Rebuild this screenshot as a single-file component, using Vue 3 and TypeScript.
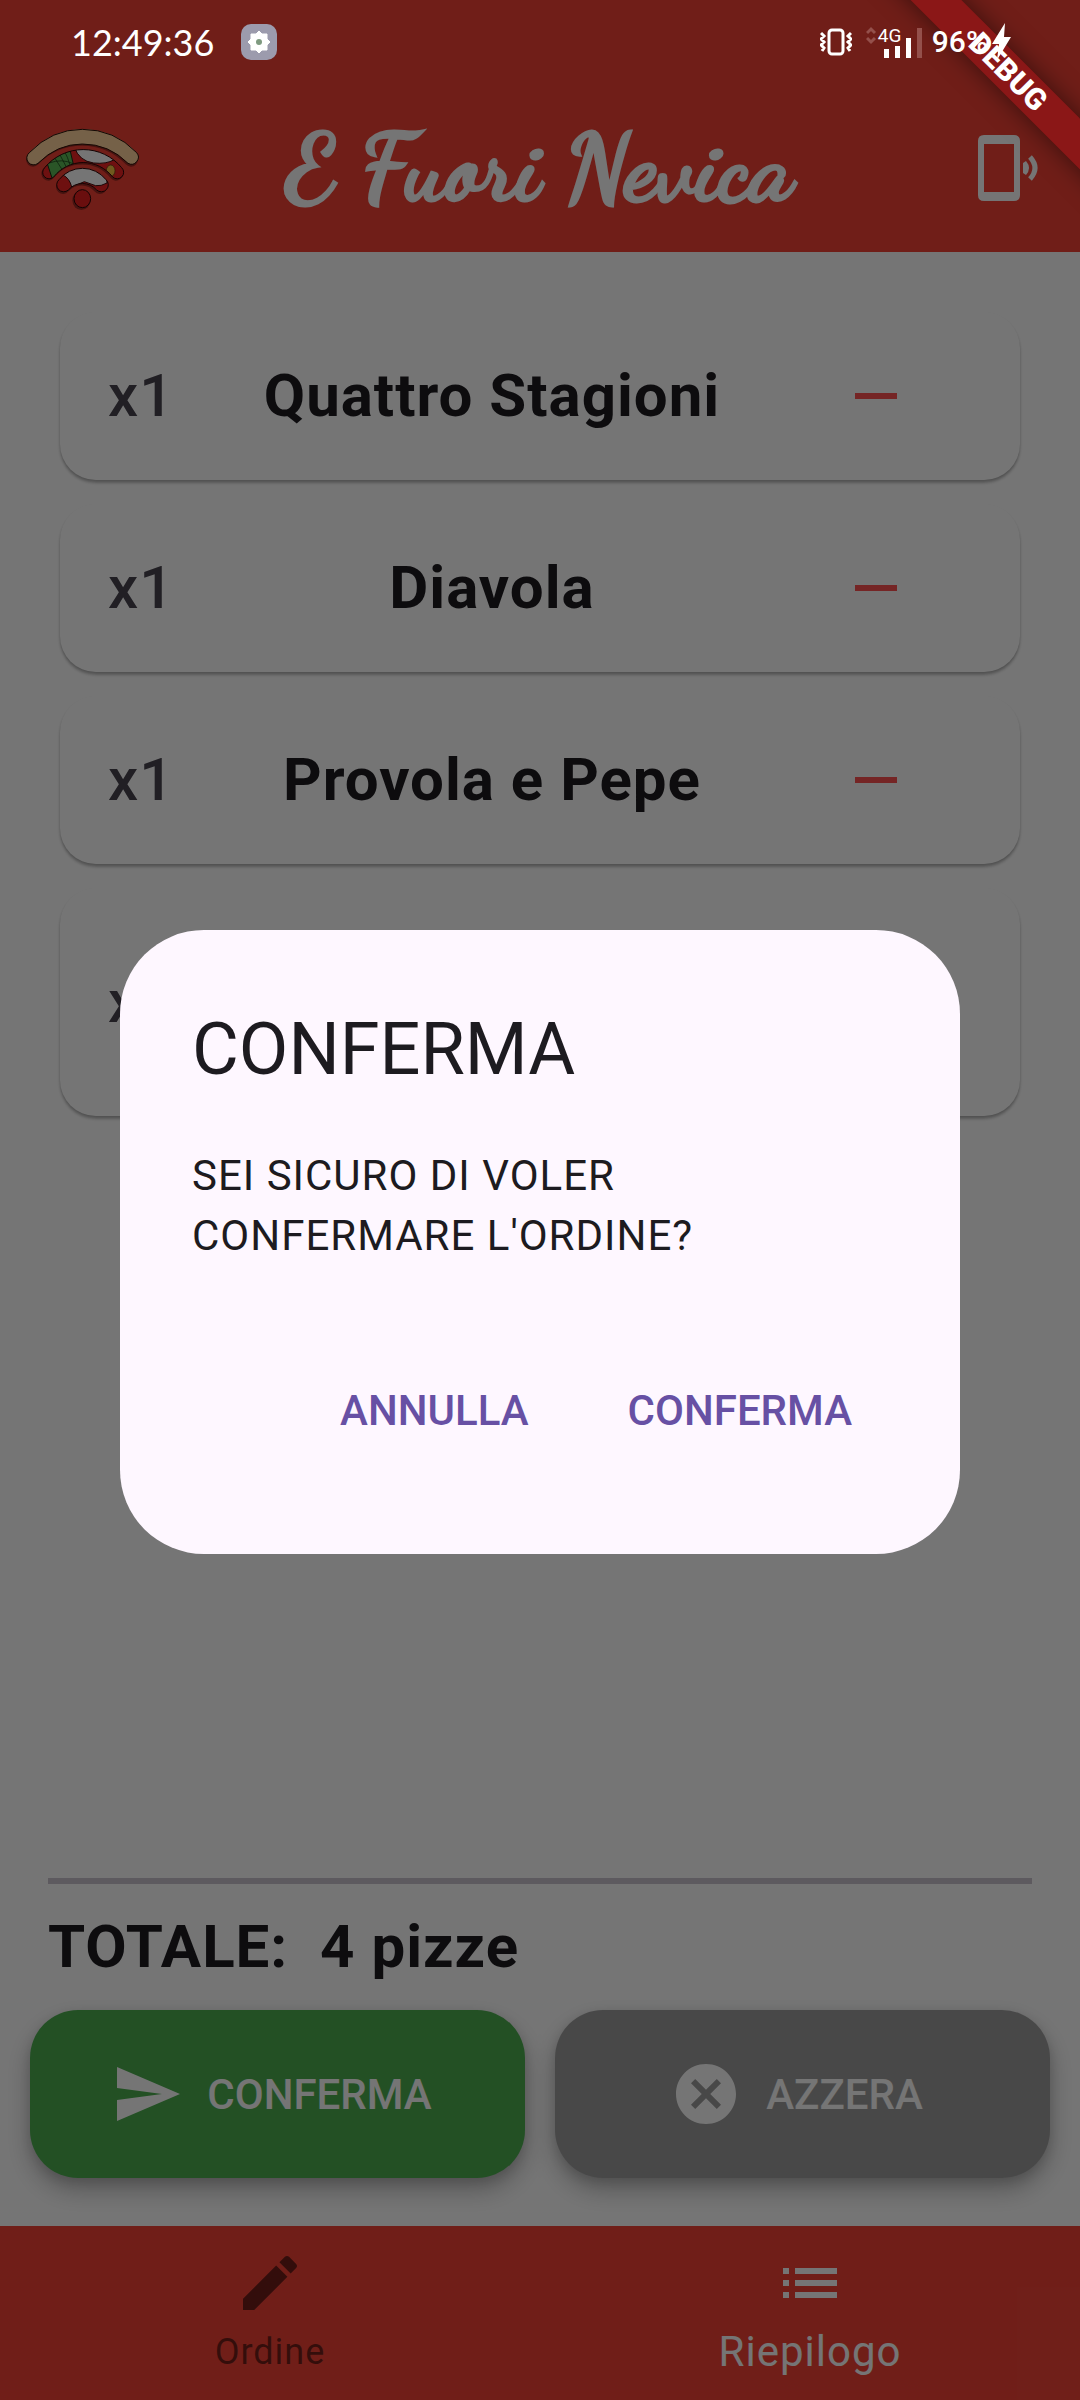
<script setup lang="ts">
import { computed, ref } from 'vue'

interface OrderLine {
  id: number
  quantity: number
  name: string
  tall?: boolean
}

const lines = ref<OrderLine[]>([
  { id: 1, quantity: 1, name: 'Quattro Stagioni' },
  { id: 2, quantity: 1, name: 'Diavola' },
  { id: 3, quantity: 1, name: 'Provola e Pepe' },
  { id: 4, quantity: 1, name: '', tall: true },
])

const total = computed<number>(() => lines.value.reduce((sum, l) => sum + l.quantity, 0))
const dialogOpen = ref<boolean>(true)

function removeLine(id: number): void {
  lines.value = lines.value.filter((l) => l.id !== id)
}
</script>

<template>
  <div class="app">
    <header class="app-bar">
      <svg class="logo" viewBox="81 374 348 258" aria-hidden="true">
        <defs>
          <clipPath id="band-mid">
            <path d="M137 502A150 150 0 0 1 368 502A19 19 0 0 1 341 530A112 112 0 0 0 164 530A19 19 0 0 1 137 502Z" />
          </clipPath>
          <clipPath id="band-low">
            <path d="M180 538A90 90 0 0 1 321 538A20 20 0 0 1 293 569A56 56 0 0 0 208 569A20 20 0 0 1 180 538Z" />
          </clipPath>
        </defs>
        <g opacity="0.35" transform="translate(-3 5)">
          <path d="M105 473A203 203 0 0 1 399 473" fill="none" stroke="#000" stroke-width="42" stroke-linecap="round" />
          <path d="M151 515A131 131 0 0 1 354 515" fill="none" stroke="#000" stroke-width="42" stroke-linecap="round" />
          <path d="M195 555A73 73 0 0 1 306 555" fill="none" stroke="#000" stroke-width="42" stroke-linecap="round" />
          <ellipse cx="250" cy="595" rx="27" ry="29" />
        </g>
        <path d="M91 457Q158 387 250 387Q346 387 413 457A21 21 0 0 1 387 489Q330 431 250 431Q174 431 117 489A20 20 0 0 1 91 457Z" fill="#ffd39d" stroke="#2a1208" stroke-width="3" />
        <path d="M137 502A150 150 0 0 1 368 502A19 19 0 0 1 341 530A112 112 0 0 0 164 530A19 19 0 0 1 137 502Z" fill="#ef2323" />
        <g clip-path="url(#band-mid)">
          <path d="M143 484L211 440L223 492L160 536Z" fill="#5cb956" stroke="#173014" stroke-width="3" />
          <path d="M150 488Q190 474 222 490M168 474L190 509M182 462L202 500M197 454Q206 470 213 494" fill="none" stroke="#173014" stroke-width="2" />
          <path d="M226 440Q290 430 346 478Q322 492 284 488Q240 482 226 440Z" fill="#fff" stroke="#401010" stroke-width="3" />
          <ellipse cx="335" cy="511" rx="13" ry="17" fill="#f3c545" stroke="#5a3a10" stroke-width="2" />
        </g>
        <path d="M137 502A150 150 0 0 1 368 502A19 19 0 0 1 341 530A112 112 0 0 0 164 530A19 19 0 0 1 137 502Z" fill="none" stroke="#2a0808" stroke-width="3" />
        <path d="M180 538A90 90 0 0 1 321 538A20 20 0 0 1 293 569A56 56 0 0 0 208 569A20 20 0 0 1 180 538Z" fill="#ef2323" />
        <g clip-path="url(#band-low)">
          <path d="M192 524Q212 534 218 560L256 544L290 556Q306 558 324 548L322 500H200Z" fill="#fff" stroke="#401010" stroke-width="3" />
        </g>
        <path d="M180 538A90 90 0 0 1 321 538A20 20 0 0 1 293 569A56 56 0 0 0 208 569A20 20 0 0 1 180 538Z" fill="none" stroke="#2a0808" stroke-width="3" />
        <ellipse cx="250" cy="595" rx="25" ry="27" fill="#e61f1f" stroke="#2a0808" stroke-width="3" />
      </svg>
      <h1 class="brand">E Fuori Nevica</h1>
      <button class="reader" type="button" aria-label="Dispositivo">
        <svg viewBox="0 0 80 72" aria-hidden="true">
          <path fill-rule="evenodd" d="M12 3H42Q48 3 48 9V63Q48 69 42 69H12Q6 69 6 63V9Q6 3 12 3ZM12 12V60H42V12Z" fill="#fff" />
          <path d="M51 31L54 29Q60 36 54 43L51 41Z" fill="#fff" />
          <path d="M58 25Q68 36 58 47" fill="none" stroke="#fff" stroke-width="5" />
        </svg>
      </button>
    </header>

    <main class="content">
      <ul class="order">
        <li v-for="line in lines" :key="line.id" class="card" :class="{ tall: line.tall }">
          <span class="qty">x{{ line.quantity }}</span>
          <span class="name">{{ line.name }}</span>
          <button class="remove" type="button" aria-label="Rimuovi" @click="removeLine(line.id)">
            <svg viewBox="0 0 24 24" aria-hidden="true"><path d="M5 11h14v2H5z" fill="currentColor" /></svg>
          </button>
        </li>
      </ul>

      <section class="summary">
        <p class="total">TOTALE:&nbsp; {{ total }} pizze</p>
      </section>

      <div class="actions">
        <button class="action confirm" type="button" @click="dialogOpen = true">
          <svg viewBox="0 0 24 24" aria-hidden="true">
            <path d="M2.01 21L23 12 2.01 3 2 10l15 2-15 2z" fill="currentColor" />
          </svg>
          <span>CONFERMA</span>
        </button>
        <button class="action reset" type="button">
          <svg viewBox="0 0 24 24" aria-hidden="true">
            <path d="M12 2C6.47 2 2 6.47 2 12s4.47 10 10 10 10-4.47 10-10S17.53 2 12 2zm5 13.59L15.59 17 12 13.41 8.41 17 7 15.59 10.59 12 7 8.41 8.41 7 12 10.59 15.59 7 17 8.41 13.41 12 17 15.59z" fill="currentColor" />
          </svg>
          <span>AZZERA</span>
        </button>
      </div>
    </main>

    <nav class="tabs">
      <button class="tab" type="button">
        <svg viewBox="0 0 24 24" aria-hidden="true">
          <path d="M3 17.25V21h3.75L17.81 9.94l-3.75-3.75L3 17.25zM20.71 7.04c.39-.39.39-1.02 0-1.41l-2.34-2.34c-.39-.39-1.02-.39-1.41 0l-1.83 1.83 3.75 3.75 1.83-1.83z" fill="currentColor" />
        </svg>
        <span>Ordine</span>
      </button>
      <button class="tab current" type="button">
        <svg viewBox="0 0 24 24" aria-hidden="true">
          <path d="M3 13h2v-2H3v2zm0 4h2v-2H3v2zm0-8h2V7H3v2zm4 4h14v-2H7v2zm0 4h14v-2H7v2zM7 7v2h14V7H7z" fill="currentColor" />
        </svg>
        <span>Riepilogo</span>
      </button>
    </nav>

    <div v-if="dialogOpen" class="scrim">
      <div class="dialog" role="dialog" aria-modal="true" aria-labelledby="dialog-title">
        <h2 id="dialog-title">CONFERMA</h2>
        <p>SEI SICURO DI VOLER CONFERMARE L'ORDINE?</p>
        <div class="dialog-actions">
          <button type="button" @click="dialogOpen = false">ANNULLA</button>
          <button type="button" @click="dialogOpen = false">CONFERMA</button>
        </div>
      </div>
    </div>

    <div class="debug"><span>DEBUG</span></div>

    <div class="status">
      <span class="clock">12:49:36</span>
      <svg class="gear" viewBox="0 0 36 36" aria-hidden="true">
        <rect width="36" height="36" rx="10" fill="#9c9bad" />
        <path d="M18 7L21 10H26V15L29 18L26 21V26H21L18 29L15 26H10V21L7 18L10 15V10H15Z" fill="#fff" stroke="#fff" stroke-width="1" stroke-linejoin="round" />
        <circle cx="18" cy="18" r="3" fill="#7f9a80" />
      </svg>
      <div class="status-right">
        <svg class="vibrate" viewBox="0 0 32 28" aria-hidden="true">
          <rect x="9" y="2" width="14" height="24" rx="3" fill="none" stroke="#fff" stroke-width="3" />
          <path d="M1 5L4 8L1 11L4 14L1 17L4 20L2 23M31 5L28 8L31 11L28 14L31 17L28 20L30 23" fill="none" stroke="#fff" stroke-width="3" />
        </svg>
        <div class="signal">
          <svg viewBox="0 0 58 32" aria-hidden="true">
            <path d="M1 7L5 3L9 7M1 12L5 16L9 12" fill="none" stroke="#94504b" stroke-width="3" />
            <path d="M18 23h5v9h-5zM29 20h5v12h-5zM40 12h5v20h-5z" fill="#fff" />
            <path d="M51 2h5v30h-5z" fill="#94504b" />
          </svg>
          <span class="network">4G</span>
        </div>
        <span class="battery">96%</span>
        <svg class="bolt" viewBox="0 0 20 38" aria-hidden="true">
          <path d="M13 0L0 21H7L5 37L19 14H12Z" fill="#fff" />
        </svg>
      </div>
    </div>
  </div>
</template>

<style>
body {
  margin: 0;
}
</style>

<style scoped>
.app {
  position: relative;
  display: flex;
  flex-direction: column;
  min-height: 100vh;
  overflow: hidden;
  background: #fff;
  color: #1d1b20;
  font-family: Roboto, 'Noto Sans', sans-serif;
}

button {
  margin: 0;
  padding: 0;
  border: 0;
  background: none;
  color: inherit;
  font: inherit;
  letter-spacing: inherit;
  cursor: pointer;
}

svg {
  display: block;
  flex: none;
}

.app-bar {
  display: grid;
  grid-template-columns: 1fr auto 1fr;
  align-items: center;
  height: 168px;
  padding: 84px 28px 0 26px;
  background: #f44336;
  color: #fff;
}

.logo {
  width: 116px;
  height: 86px;
}

.brand {
  margin: 0;
  font: 700 94px/120px 'Dancing Script', 'Liberation Serif', serif;
  -webkit-text-stroke: 3px currentColor;
}

.reader {
  justify-self: end;
}

.reader svg {
  width: 80px;
  height: 72px;
}

.content {
  display: flex;
  flex: 1;
  flex-direction: column;
  padding: 60px 30px 48px;
}

.order {
  display: flex;
  flex: 1;
  flex-direction: column;
  gap: 24px;
  margin: 0;
  padding: 0 30px;
  list-style: none;
}

.card {
  display: flex;
  align-items: center;
  gap: 48px;
  min-height: 168px;
  padding: 0 72px 0 48px;
  border-radius: 36px;
  background: #fff;
  box-shadow: 0 3px 3px rgba(0, 0, 0, 0.26), 0 1px 2px rgba(0, 0, 0, 0.08);
  box-sizing: border-box;
  font-size: 60px;
  line-height: 72px;
  letter-spacing: 1px;
}

.card.tall {
  min-height: 228px;
}

.qty {
  width: 72px;
  color: #49454f;
  font-weight: 500;
}

.name {
  flex: 1;
  font-weight: 700;
  text-align: center;
}

.remove {
  display: grid;
  place-items: center;
  width: 144px;
  height: 144px;
  color: #ff5252;
}

.remove svg,
.action svg,
.tab svg {
  width: 72px;
  height: 72px;
}

.summary {
  margin: 0 18px;
  border-top: 6px solid #cac4d0;
}

.total {
  margin: 27px 0;
  font-size: 60px;
  font-weight: 700;
  line-height: 72px;
  letter-spacing: 1px;
}

.actions {
  display: grid;
  grid-template-columns: 1fr 1fr;
  gap: 30px;
}

.action {
  display: flex;
  align-items: center;
  justify-content: center;
  gap: 24px;
  height: 168px;
  padding-right: 12px;
  border-radius: 48px;
  box-shadow: 0 12px 24px rgba(0, 0, 0, 0.26), 0 4px 12px rgba(0, 0, 0, 0.12);
  color: #fff;
  font-size: 42px;
  font-weight: 500;
}

.confirm {
  background: #4caf50;
}

.reset {
  background: #9e9e9e;
}

.tabs {
  display: flex;
  background: #f44336;
}

.tab {
  display: flex;
  flex: 1;
  flex-direction: column;
  align-items: center;
  gap: 9px;
  padding: 21px 0 24px;
  color: rgba(0, 0, 0, 0.54);
  font-size: 36px;
  line-height: 48px;
  letter-spacing: 1px;
}

.tab.current {
  color: #fff;
  font-size: 42px;
}

.scrim {
  position: absolute;
  inset: 0;
  display: flex;
  align-items: center;
  justify-content: center;
  padding: 84px 120px 0;
  background: rgba(0, 0, 0, 0.54);
}

.dialog {
  width: 100%;
  padding: 72px;
  border-radius: 84px;
  background: #fef7ff;
  box-sizing: border-box;
}

.dialog h2 {
  margin: 0 0 48px;
  font-size: 72px;
  font-weight: 400;
  line-height: 96px;
}

.dialog p {
  max-width: 560px;
  margin: 0 0 72px;
  font-size: 42px;
  line-height: 60px;
  letter-spacing: 1px;
}

.dialog-actions {
  display: flex;
  justify-content: flex-end;
  gap: 27px;
}

.dialog-actions button {
  height: 144px;
  padding: 0 36px;
  color: #6750a4;
  font-size: 42px;
  font-weight: 500;
}

.debug {
  position: absolute;
  top: 0;
  right: 0;
  width: 300px;
  height: 300px;
  overflow: hidden;
}

.debug span {
  position: absolute;
  top: 54px;
  right: -168px;
  width: 480px;
  transform: rotate(45deg);
  background: #8b1717;
  box-shadow: 0 0 24px rgba(0, 0, 0, 0.5);
  color: #fff;
  font-size: 30px;
  font-weight: 900;
  line-height: 36px;
  text-align: center;
}

.status {
  position: absolute;
  top: 0;
  right: 0;
  left: 0;
  display: flex;
  align-items: center;
  height: 84px;
  padding: 0 68px 0 71px;
  box-sizing: border-box;
  color: #fff;
}

.clock {
  font-family: Lato, sans-serif;
  font-size: 36px;
  line-height: 40px;
}

.gear {
  width: 36px;
  height: 36px;
  margin-left: 27px;
}

.status-right {
  display: flex;
  align-items: center;
  margin-left: auto;
}

.vibrate {
  width: 32px;
  height: 28px;
}

.signal {
  position: relative;
  margin: 0 8px 0 14px;
}

.signal svg {
  width: 58px;
  height: 32px;
}

.network {
  position: absolute;
  top: 0;
  left: 12px;
  font-size: 19px;
  line-height: 20px;
}

.battery {
  font-size: 30px;
  font-weight: 500;
  line-height: 40px;
}

.bolt {
  width: 20px;
  height: 38px;
  margin-left: 4px;
}
</style>
